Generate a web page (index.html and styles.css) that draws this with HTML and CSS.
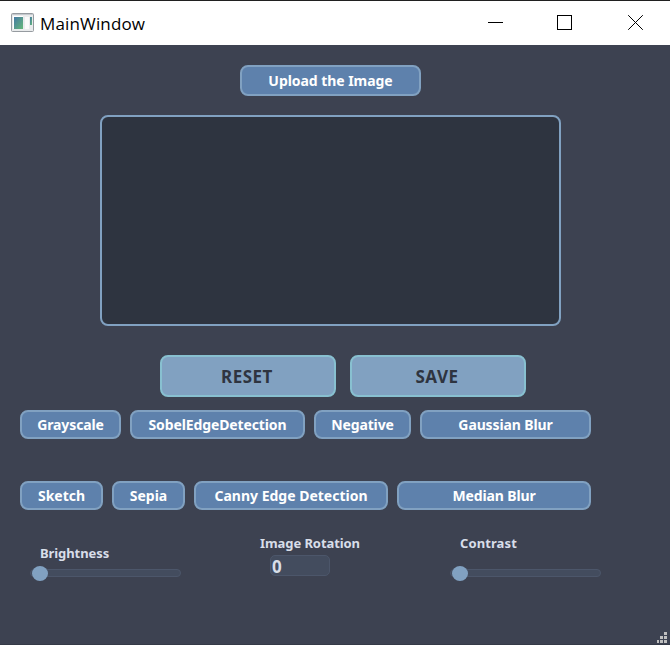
FILE: index.html
```html
<!DOCTYPE html>
<html lang="en">
<head>
<meta charset="utf-8">
<title>MainWindow</title>
<link rel="stylesheet" href="styles.css">
</head>
<body>
<div class="window">
  <header class="titlebar">
    <svg class="app-icon" width="23" height="19" viewBox="0 0 23 19">
      <defs><linearGradient id="pane" x1="0" y1="0" x2="1" y2="1"><stop offset="0" stop-color="#4679a5"/><stop offset="1" stop-color="#64b878"/></linearGradient></defs>
      <rect x=".5" y=".5" width="22" height="18" rx="1" fill="#e9ebec" stroke="#969ba0"/>
      <path d="M1 1.500h21" stroke="#c5c9ce"/>
      <rect x="2" y="3" width="10" height="13" fill="#fff"/>
      <rect x="3" y="4" width="9" height="12" fill="url(#pane)"/>
      <rect x="14" y="4" width="4" height="12" fill="#fafafa"/>
      <rect x="19" y="4" width="2" height="8" fill="url(#pane)"/>
    </svg>
    <span class="title">MainWindow</span>
    <svg class="controls" width="156" height="16" viewBox="0 0 156 16" fill="none" stroke="#000">
      <path d="M0 7.500h15"/>
      <rect x="69.500" y=".5" width="14" height="14"/>
      <path d="M140.200 .2l14.600 14.600M154.800 .2l-14.600 14.600"/>
    </svg>
  </header>
  <main class="content">
    <button class="btn upload"><span>Upload the Image</span></button>
    <div class="preview"></div>
    <div class="actions">
      <button class="btn action reset"><span>RESET</span></button>
      <button class="btn action save"><span>SAVE</span></button>
    </div>
    <div class="filters first">
      <button class="btn tight grayscale"><span>Grayscale</span></button>
      <button class="btn tight sobel"><span>SobelEdgeDetection</span></button>
      <button class="btn tight negative"><span>Negative</span></button>
      <button class="btn tight gaussian"><span>Gaussian Blur</span></button>
    </div>
    <div class="filters second">
      <button class="btn sketch"><span>Sketch</span></button>
      <button class="btn sepia"><span>Sepia</span></button>
      <button class="btn canny"><span>Canny Edge Detection</span></button>
      <button class="btn tight median"><span>Median Blur</span></button>
    </div>
    <div class="adjustments">
      <div class="field brightness"><label>Brightness</label><div class="slider"><i class="handle"></i></div></div>
      <div class="field rotation"><label>Image Rotation</label><div class="spin">0</div></div>
      <div class="field contrast"><label>Contrast</label><div class="slider"><i class="handle"></i></div></div>
    </div>
    <svg class="grip" width="10" height="11" viewBox="0 0 10 11" fill="#bfbfbf">
      <path d="M7 0h3v3H7zM3 4h3v3H3zM7 4h3v3H7zM0 8h2v3H0zM3 8h3v3H3zM7 8h3v3H7z"/>
    </svg>
  </main>
</div>
</body>
</html>
```
FILE: styles.css
```css
* { box-sizing: border-box; }
body { margin: 0; }
.window {
  width: 670px;
  height: 645px;
  display: flex;
  flex-direction: column;
  overflow: hidden;
  font-family: "Noto Sans", sans-serif;
}
.titlebar {
  height: 45px;
  border-top: 1px solid #202020;
  background: #fff;
  display: flex;
  align-items: center;
  padding: 0 26px 0 11px;
}
.app-icon { margin-top: -2px; }
.title {
  margin-left: 6px;
  font-family: "Open Sans", sans-serif;
  font-size: 17px;
  letter-spacing: 0.15px;
  line-height: 24px;
  color: #000;
  padding-top: 2px;
}
.controls { margin-left: auto; }
.content {
  position: relative;
  flex: 1;
  padding-top: 20px;
  background: #3d4251;
  border-bottom: 1px solid #353a47;
}
.btn {
  display: flex;
  align-items: center;
  justify-content: center;
  height: 29px;
  padding: 0;
  border: 2px solid #81a1c1;
  border-radius: 8px;
  background: #5e81ac;
  color: #fff;
  font: bold 14px/20px "Noto Sans", sans-serif;
  white-space: nowrap;
}
.tight { letter-spacing: -0.12px; }
.upload { width: 181px; height: 31px; margin-left: 240px; letter-spacing: -0.05px; }
.preview {
  width: 461px;
  height: 211px;
  margin: 19px 0 0 100px;
  border: 2px solid #81a1c1;
  border-radius: 8px;
  background: #2e3440;
}
.actions { display: flex; gap: 14px; margin: 29px 0 0 160px; }
.action {
  width: 176px;
  height: 42px;
  padding: 2px 2px 0 0;
  border-color: #88c0d0;
  background: #81a1c1;
  color: #2e3440;
  font-size: 17px;
  letter-spacing: 0.5px;
}
.filters { display: flex; gap: 9px; margin-left: 20px; }
.first { margin-top: 13px; }
.second { margin-top: 42px; }
.grayscale { width: 101px; }
.sobel { width: 175px; }
.negative { width: 97px; }
.gaussian { width: 171px; }
.sketch { width: 83px; }
.sepia { width: 73px; }
.canny { width: 194px; }
.median { width: 194px; }
.adjustments { display: flex; align-items: flex-start; margin: 24px 0 0 30px; }
.field label {
  display: block;
  height: 18px;
  color: #d8dee9;
  font-size: 13px;
  font-weight: bold;
  letter-spacing: -0.08px;
  line-height: 18px;
  white-space: nowrap;
}
.field.contrast label { letter-spacing: 0.1px; }
.brightness { width: 230px; padding-top: 10px; }
.brightness label, .contrast label { margin-left: 10px; }
.rotation { width: 190px; }
.slider {
  display: flex;
  align-items: center;
  width: 151px;
  height: 8px;
  padding-left: 1px;
  border: 1px solid #4c566a;
  border-radius: 4px;
  background: #434c5e;
}
.brightness .slider { margin-top: 7px; }
.contrast .slider { margin-top: 17px; }
.handle { width: 16px; height: 15px; flex: none; border-radius: 50%; background: #81a1c1; }
.spin {
  width: 60px;
  height: 21px;
  margin: 3px 0 0 10px;
  padding-left: 1px;
  border: 1px solid #4c566a;
  border-radius: 5px;
  background: #434c5e;
  color: #d8dee9;
  font-size: 17px;
  font-weight: bold;
  line-height: 21px;
}
.grip { position: absolute; right: 3px; bottom: 1px; }
```
